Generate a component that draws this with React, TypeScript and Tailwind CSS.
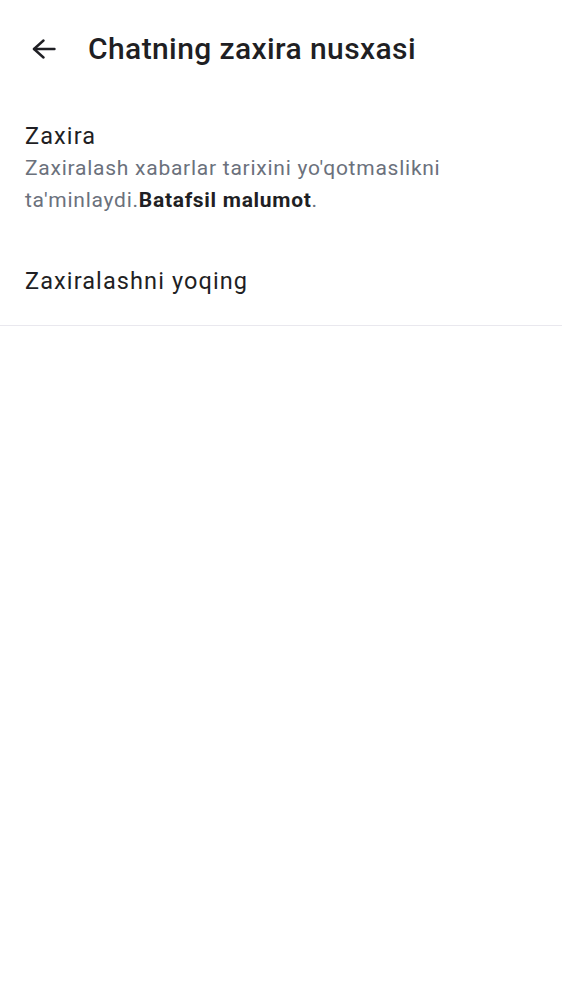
export default function App() {
  return (
    <div className="min-h-screen bg-white font-['Roboto',sans-serif] text-[#1f1f24]">
      {/* top bar */}
      <header className="flex h-[100px] items-center pb-[2px] pl-[32px]">
        <button className="flex items-center">
          <svg
            viewBox="0 0 24 20"
            className="h-[20px] w-[24px]"
            fill="none"
            stroke="currentColor"
            strokeWidth="2.4"
            strokeLinecap="round"
            strokeLinejoin="round"
          >
            <path d="M22.5 10H2" />
            <path d="M11.5 1.5L2 10l9.5 8.5" />
          </svg>
        </button>
        <h1 className="ml-[32px] text-[30px] font-medium leading-[30px] tracking-[0.4px]">
          Chatning zaxira nusxasi
        </h1>
      </header>

      <section className="px-[25px] pt-[21px]">
        <h2 className="text-[23.5px] leading-[30px] tracking-[1.1px]">Zaxira</h2>
        <p className="mt-[1px] text-[21px] leading-[32px] tracking-[0.75px] text-[#6b717c]">
          Zaxiralash xabarlar tarixini yo'qotmaslikni
          <br />
          ta'minlaydi.
          <span className="font-bold tracking-[0.7px] text-[#1f1f24]">Batafsil malumot</span>.
        </p>
      </section>

      <div className="border-b border-[#e9e8ee] px-[25px] pt-[50px] pb-[29px]">
        <div className="text-[23.5px] leading-[30px] tracking-[1.1px]">Zaxiralashni yoqing</div>
      </div>
    </div>
  );
}
